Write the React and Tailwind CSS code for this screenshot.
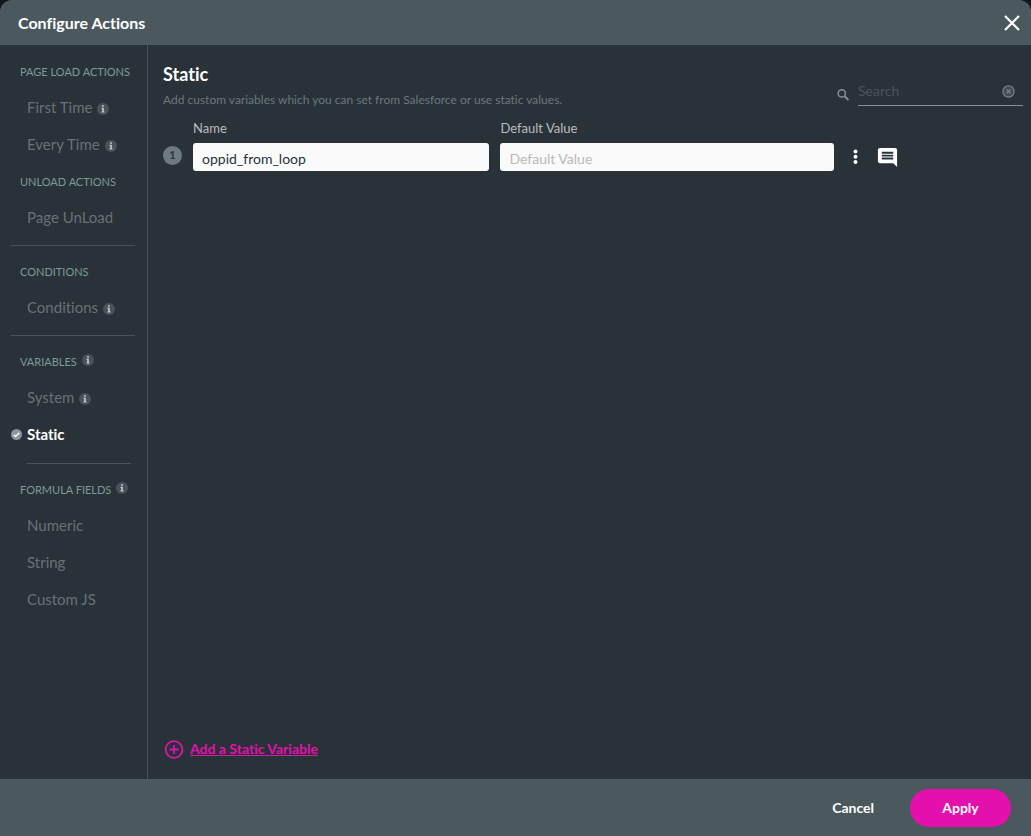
import { useState } from "react";

const sections = [
  {
    title: "Page Load Actions",
    items: [
      { name: "First Time", info: true },
      { name: "Every Time", info: true },
    ],
  },
  { title: "Unload Actions", items: [{ name: "Page UnLoad" }], divider: "full" },
  { title: "Conditions", items: [{ name: "Conditions", info: true }], divider: "full" },
  {
    title: "Variables",
    info: true,
    items: [{ name: "System", info: true }, { name: "Static" }],
    divider: "inset",
  },
  {
    title: "Formula Fields",
    info: true,
    items: [{ name: "Numeric" }, { name: "String" }, { name: "Custom JS" }],
  },
];

function InfoIcon() {
  return (
    <svg className="size-3 shrink-0" viewBox="0 0 12 12" aria-hidden="true">
      <circle cx="6" cy="6" r="6" fill="#485359" />
      <path d="M5.1 2.2h1.8v1.6H5.1zM4.4 4.8h2.4v3.6h.8v1H4.4v-1h.8V5.8h-.8z" fill="#c9cdcf" />
    </svg>
  );
}

function CheckIcon() {
  return (
    <svg className="absolute left-0 size-[11px]" viewBox="0 0 12 12" aria-hidden="true">
      <circle cx="6" cy="6" r="6" fill="#8a979d" />
      <path d="M3 6.2l2.1 2L9 4.2" fill="none" stroke="#fff" strokeWidth="1.5" />
    </svg>
  );
}

function Sidebar({ active, onSelect }) {
  return (
    <nav className="w-37 shrink-0 border-r border-[#46535a] pt-[9px] pr-3 pl-[11px]">
      {sections.map((section) => (
        <div key={section.title}>
          <h3 className="flex h-9 items-center gap-[5px] pl-[9px] text-[11px] whitespace-nowrap text-[#7d9a95] uppercase">
            {section.title}
            {section.info && (
              <span className="pb-1">
                <InfoIcon />
              </span>
            )}
          </h3>
          {section.items.map((item) => (
            <button
              key={item.name}
              onClick={() => onSelect(item.name)}
              className={`relative flex h-[37px] w-full items-center gap-[5px] pb-0.5 pl-4 text-[15px] whitespace-nowrap ${
                active === item.name ? "font-bold text-white" : "text-[#697177]"
              }`}
            >
              {active === item.name && <CheckIcon />}
              {item.name}
              {item.info && (
                <span className="pt-0.5">
                  <InfoIcon />
                </span>
              )}
            </button>
          ))}
          {section.divider === "full" && <hr className="my-2 border-[#46535a]" />}
          {section.divider === "inset" && (
            <hr className="mt-[9px] mr-1 mb-2 ml-4 border-[#46535a]" />
          )}
        </div>
      ))}
    </nav>
  );
}

export default function App() {
  const [active, setActive] = useState("Static");
  const [search, setSearch] = useState("");
  const [name, setName] = useState("oppid_from_loop");
  const [value, setValue] = useState("");

  return (
    <div className="min-h-screen bg-[#12171a] font-['Lato',sans-serif] [font-variant-ligatures:none]">
      <div className="flex min-h-screen flex-col overflow-hidden rounded-t-xl bg-[#283238]">
        {/* Header */}
        <header className="flex h-[45px] items-center justify-between bg-[#4b595f] pr-[11px] pl-[18px]">
          <h1 className="text-base font-bold text-white">Configure Actions</h1>
          <button aria-label="Close">
            <svg className="size-4" viewBox="0 0 16 16">
              <path d="M1 1l14 14M15 1L1 15" stroke="#fff" strokeWidth="2.2" />
            </svg>
          </button>
        </header>

        <div className="flex flex-1">
          <Sidebar active={active} onSelect={setActive} />

          <main className="flex flex-1 flex-col pt-[17px] pr-2 pl-[15px]">
            <div className="flex items-start justify-between">
              <div>
                <h2 className="text-lg leading-6 font-bold text-white">Static</h2>
                <p className="mt-1 text-xs leading-5 text-[#6b777d]">
                  Add custom variables which you can set from Salesforce or use static values.
                </p>
              </div>

              {/* Search */}
              <div className="flex items-center gap-2 pt-4">
                <svg className="mt-1.5 size-3.5" viewBox="0 0 14 14" fill="none" stroke="#84929a" aria-hidden="true">
                  <circle cx="5.8" cy="5.4" r="3.6" strokeWidth="1.5" />
                  <path d="M8.4 8l4 4" strokeWidth="1.9" />
                </svg>
                <div className="flex h-7 w-[165px] items-center border-b border-[#84929a] pr-2">
                  <input
                    type="text"
                    aria-label="Search"
                    placeholder="Search"
                    className="min-w-0 flex-1 pb-0.5 text-sm text-white outline-none placeholder:text-[#48555c]"
                    value={search}
                    onChange={(e) => setSearch(e.target.value)}
                  />
                  <button aria-label="Clear search" onClick={() => setSearch("")}>
                    <svg className="size-[13px]" viewBox="0 0 13 13" fill="none" stroke="#76848b">
                      <circle cx="6.5" cy="6.5" r="5.6" fill="#3f4b51" strokeWidth="1.2" />
                      <path d="M4.5 4.5l4 4M8.5 4.5l-4 4" strokeWidth="1.3" />
                    </svg>
                  </button>
                </div>
              </div>
            </div>

            {/* Variables */}
            <div className="mt-2 grid grid-cols-[19px_8fr_9fr_178px] items-center gap-x-[11px] gap-y-[5px]">
              <label htmlFor="name" className="col-start-2 text-[13px] leading-5 text-[#b9bdbf]">
                Name
              </label>
              <label htmlFor="value" className="col-span-2 text-[13px] leading-5 text-[#b9bdbf]">
                Default Value
              </label>

              <span className="mb-1 flex size-[19px] items-center justify-center rounded-full bg-[#6d7b81] text-[11px] font-bold text-[#283238]">
                1
              </span>
              <input
                id="name"
                type="text"
                className="h-7 min-w-0 rounded-[3px] bg-[#fafafa] px-[9px] pt-0.5 text-sm text-[#283238]"
                value={name}
                onChange={(e) => setName(e.target.value)}
              />
              <input
                id="value"
                type="text"
                placeholder="Default Value"
                className="h-7 min-w-0 rounded-[3px] bg-[#fafafa] px-[9px] pt-0.5 text-sm text-[#283238] placeholder:text-[#b9b9b9]"
                value={value}
                onChange={(e) => setValue(e.target.value)}
              />
              <div className="flex items-center gap-[11px]">
                <button aria-label="More options">
                  <svg className="size-5" viewBox="0 0 20 20" fill="#fff">
                    <circle cx="10.5" cy="4.5" r="2" />
                    <circle cx="10.5" cy="9.7" r="2" />
                    <circle cx="10.5" cy="15" r="2" />
                  </svg>
                </button>
                <button aria-label="Comment">
                  <svg className="size-[23px]" viewBox="0 0 24 24" fill="#fff">
                    <path d="M21.99 4c0-1.1-.89-2-1.99-2H4c-1.1 0-2 .9-2 2v12c0 1.1.9 2 2 2h14l4 4-.01-18zM18 14H6v-2h12v2zm0-3H6V9h12v2zm0-3H6V6h12v2z" />
                  </svg>
                </button>
              </div>
            </div>

            <button className="mt-auto mb-5 ml-px flex items-center gap-1.5 self-start text-sm font-bold text-[#e310ae]">
              <svg className="size-5" viewBox="0 0 20 20" fill="none" stroke="currentColor" aria-hidden="true">
                <circle cx="10" cy="10.5" r="8.4" strokeWidth="1.8" />
                <path d="M10 6v9M5.5 10.5h9" strokeWidth="1.8" />
              </svg>
              <span className="underline">Add a Static Variable</span>
            </button>
          </main>
        </div>

        {/* Footer */}
        <footer className="flex h-[57px] items-center justify-end gap-9 bg-[#4b595f] pr-5">
          <button className="text-sm font-bold text-white">Cancel</button>
          <button className="h-[38px] w-[101px] rounded-full bg-[#e310ae] text-sm font-bold text-white">
            Apply
          </button>
        </footer>
      </div>
    </div>
  );
}
